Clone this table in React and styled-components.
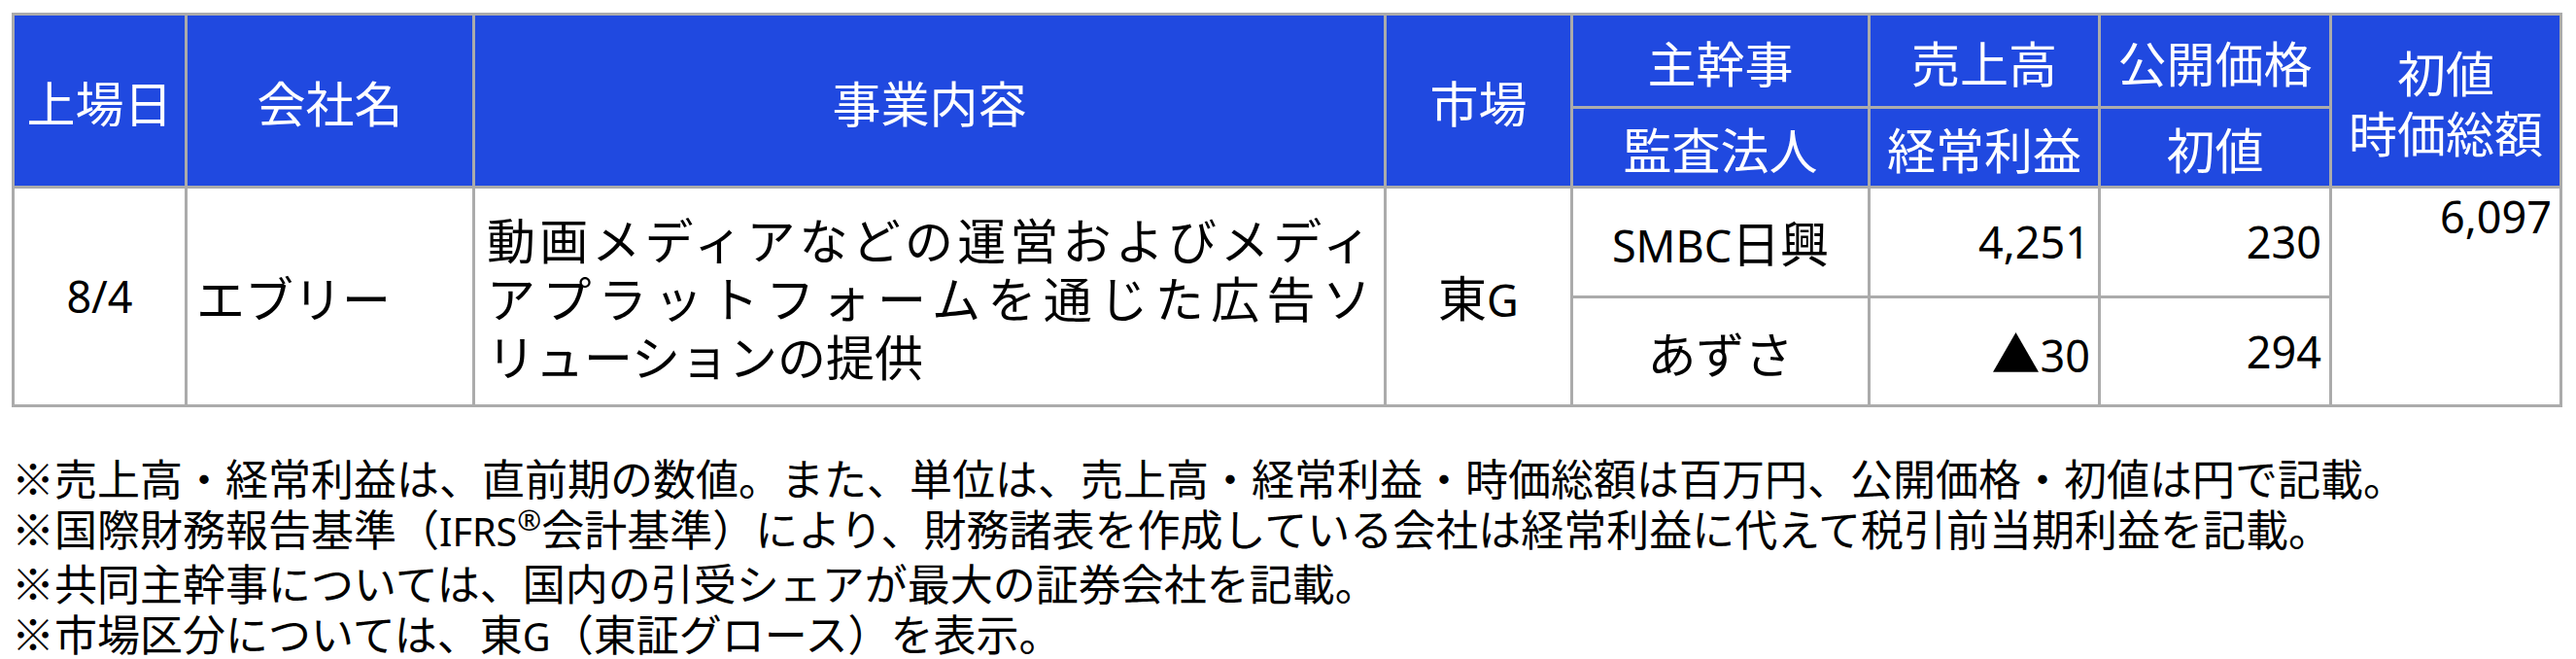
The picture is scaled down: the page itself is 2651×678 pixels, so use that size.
import React from 'react';
import styled, { createGlobalStyle } from 'styled-components';

const GlobalStyle = createGlobalStyle`
  html, body { margin: 0; padding: 0; background: #ffffff; }
  body {
    font-family: "Noto Sans CJK JP", "Noto Sans", sans-serif;
    color: #000000;
  }
`;

const Page = styled.div`
  padding: 13px 0 0 12px;
`;

const Table = styled.div`
  display: grid;
  grid-template-columns: 175px 293px 935px 189px 303px 234px 235px 234px;
  grid-template-rows: 93px 79px 110px 109px;
  gap: 3px;
  padding: 3px;
  background: #ababab;
  width: max-content;
`;

const alignMap = { left: 'flex-start', center: 'center', right: 'flex-end' };

const Cell = styled.div`
  grid-column: ${(p) => p.$col} / span ${(p) => p.$colSpan || 1};
  grid-row: ${(p) => p.$row} / span ${(p) => p.$rowSpan || 1};
  display: flex;
  flex-direction: column;
  justify-content: ${(p) => (p.$valign === 'top' ? 'flex-start' : 'center')};
  align-items: ${(p) => alignMap[p.$align || 'center']};
  text-align: ${(p) => p.$align || 'center'};
  font-size: 50px;
  line-height: 1.2;
  white-space: nowrap;
  box-sizing: border-box;
`;

const HeadCell = styled(Cell)`
  background: #2049e0;
  color: #ffffff;
  line-height: ${(p) => (p.$twoLines ? '62px' : '1.2')};
`;

const BodyCell = styled(Cell)`
  background: #ffffff;
  color: #000000;
  padding: ${(p) => p.$pad || '0'};
`;

const Latin = styled.span`
  font-family: "Noto Sans", sans-serif;
  font-size: 0.9em;
`;

const Num = styled.span`
  font-family: "Noto Sans", sans-serif;
  font-size: 45px;
`;

const Mark = styled.span`
  font-family: "Noto Sans CJK JP", sans-serif;
  font-size: 50px;
`;

const Desc = styled.div`
  width: 100%;
  font-size: 50px;
  line-height: 60px;
`;

const DescLine = styled.div`
  text-align: ${(p) => (p.$justify ? 'justify' : 'left')};
  text-align-last: ${(p) => (p.$justify ? 'justify' : 'left')};
  text-justify: inter-character;
`;

const Notes = styled.div`
  margin-top: 46px;
  font-size: 44px;
  line-height: 52px;
  white-space: nowrap;
`;

const Note = styled.div``;

const Sup = styled.span`
  font-family: "Noto Sans", sans-serif;
  font-size: 0.68em;
  vertical-align: 0.55em;
  line-height: 0;
`;

export default function App() {
  return (
    <Page lang="ja">
      <GlobalStyle />
      <Table>
        <HeadCell $col={1} $row={1} $rowSpan={2}>上場日</HeadCell>
        <HeadCell $col={2} $row={1} $rowSpan={2}>会社名</HeadCell>
        <HeadCell $col={3} $row={1} $rowSpan={2}>事業内容</HeadCell>
        <HeadCell $col={4} $row={1} $rowSpan={2}>市場</HeadCell>
        <HeadCell $col={5} $row={1}>主幹事</HeadCell>
        <HeadCell $col={6} $row={1}>売上高</HeadCell>
        <HeadCell $col={7} $row={1}>公開価格</HeadCell>
        <HeadCell $col={8} $row={1} $rowSpan={2} $twoLines>
          <span>初値</span>
          <span>時価総額</span>
        </HeadCell>
        <HeadCell $col={5} $row={2}>監査法人</HeadCell>
        <HeadCell $col={6} $row={2}>経常利益</HeadCell>
        <HeadCell $col={7} $row={2}>初値</HeadCell>

        <BodyCell $col={1} $row={3} $rowSpan={2}>
          <Num>8/4</Num>
        </BodyCell>
        <BodyCell $col={2} $row={3} $rowSpan={2} $align="left" $pad="0 0 0 9px">
          エブリー
        </BodyCell>
        <BodyCell $col={3} $row={3} $rowSpan={2} $align="left" $pad="0 13px 0 12px">
          <Desc>
            <DescLine $justify>動画メディアなどの運営およびメディ</DescLine>
            <DescLine $justify>アプラットフォームを通じた広告ソ</DescLine>
            <DescLine>リューションの提供</DescLine>
          </Desc>
        </BodyCell>
        <BodyCell $col={4} $row={3} $rowSpan={2}>
          <span>東<Latin>G</Latin></span>
        </BodyCell>
        <BodyCell $col={5} $row={3}>
          <span><Latin>SMBC</Latin>日興</span>
        </BodyCell>
        <BodyCell $col={6} $row={3} $align="right" $pad="0 8px 0 0">
          <Num>4,251</Num>
        </BodyCell>
        <BodyCell $col={7} $row={3} $align="right" $pad="0 8px 0 0">
          <Num>230</Num>
        </BodyCell>
        <BodyCell $col={8} $row={3} $rowSpan={2} $align="right" $valign="top" $pad="2px 8px 0 0">
          <Num>6,097</Num>
        </BodyCell>
        <BodyCell $col={5} $row={4}>あずさ</BodyCell>
        <BodyCell $col={6} $row={4} $align="right" $pad="0 8px 0 0">
          <span><Mark>▲</Mark><Num>30</Num></span>
        </BodyCell>
        <BodyCell $col={7} $row={4} $align="right" $pad="0 8px 0 0">
          <Num>294</Num>
        </BodyCell>
      </Table>

      <Notes>
        <Note>※売上高・経常利益は、直前期の数値。また、単位は、売上高・経常利益・時価総額は百万円、公開価格・初値は円で記載。</Note>
        <Note>
          ※国際財務報告基準（<Latin>IFRS</Latin><Sup>®</Sup>会計基準）により、財務諸表を作成している会社は経常利益に代えて税引前当期利益を記載。
        </Note>
        <Note>※共同主幹事については、国内の引受シェアが最大の証券会社を記載。</Note>
        <Note>※市場区分については、東<Latin>G</Latin>（東証グロース）を表示。</Note>
      </Notes>
    </Page>
  );
}
